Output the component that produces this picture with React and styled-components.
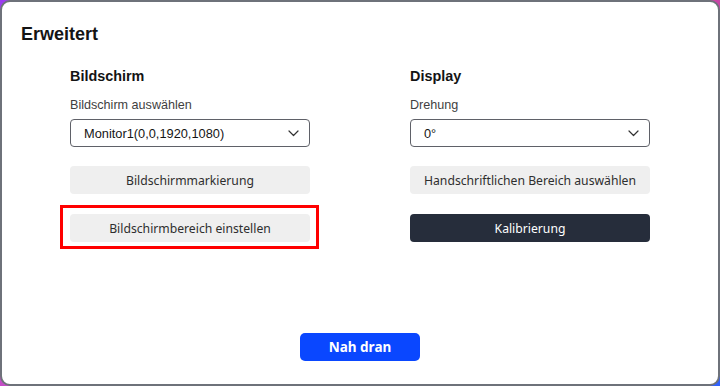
import styled, { createGlobalStyle } from 'styled-components'

const GlobalStyle = createGlobalStyle`
  html, body {
    margin: 0;
    padding: 0;
  }
  body {
    width: 720px;
    height: 386px;
    overflow: hidden;
    background: linear-gradient(135deg, #9b3cf0 0%, #c04fd0 30%, #e0409a 60%, #2f62ff 100%);
  }
`

const Window = styled.div`
  box-sizing: border-box;
  width: 720px;
  height: 386px;
  display: flex;
  flex-direction: column;
  background: #fff;
  border: 2px solid #6e727a;
  border-radius: 10px;
  padding: 20px 18px 23px;
  font-family: 'Liberation Sans', Arial, sans-serif;
  color: #1b1b1b;
`

const Title = styled.h1`
  margin: 0 0 0 1px;
  font-size: 18px;
  line-height: 24px;
  font-weight: 700;
  color: #141414;
`

const Columns = styled.div`
  display: grid;
  grid-template-columns: 240px 240px;
  column-gap: 100px;
  justify-content: center;
  margin-top: 21px;
`

const Column = styled.section`
  display: flex;
  flex-direction: column;
`

const Heading = styled.h2`
  margin: 0;
  font-size: 14.4px;
  line-height: 18px;
  font-weight: 700;
  color: #141414;
`

const Label = styled.div`
  margin-top: 12px;
  font-size: 12.6px;
  line-height: 16px;
  color: #3f3f3f;
`

const Select = styled.div`
  box-sizing: border-box;
  margin-top: 6px;
  height: 28px;
  display: flex;
  align-items: center;
  justify-content: space-between;
  padding: 0 10px 0 13px;
  border: 1px solid #5f6168;
  border-radius: 4px;
  font-size: 12.8px;
  color: #151515;
`

const Chevron = () => (
  <svg width="11" height="7" viewBox="0 0 11 7" fill="none">
    <path d="M1 1l4.5 4.5L10 1" stroke="#333" strokeWidth="1.2" strokeLinecap="round" strokeLinejoin="round" />
  </svg>
)

const Button = styled.button`
  box-sizing: border-box;
  position: relative;
  margin-top: ${p => p.$gap}px;
  height: 28px;
  width: 100%;
  border: none;
  border-radius: 4px;
  padding: 0;
  font-family: 'Noto Sans', sans-serif;
  font-size: 12.2px;
  background: ${p => (p.$dark ? '#262d3b' : '#efefef')};
  color: ${p => (p.$dark ? '#fff' : '#2e2e2e')};
`

const Marked = styled.div`
  position: relative;
  margin-top: 20px;

  ${Button} {
    margin-top: 0;
  }

  &::after {
    content: '';
    position: absolute;
    top: -9px;
    left: -10px;
    right: -9px;
    bottom: -7px;
    border: 3px solid #ff0000;
    pointer-events: none;
  }
`

const Footer = styled.div`
  margin-top: auto;
  display: flex;
  justify-content: center;
`

const PrimaryButton = styled.button`
  width: 120px;
  height: 28px;
  border: none;
  border-radius: 5px;
  background: #0a47ff;
  color: #fff;
  font-family: 'Noto Sans', sans-serif;
  font-size: 13.5px;
  font-weight: 700;
`

export default function App() {
  return (
    <>
      <GlobalStyle />
      <Window>
        <Title>Erweitert</Title>
        <Columns>
          <Column>
            <Heading>Bildschirm</Heading>
            <Label>Bildschirm auswählen</Label>
            <Select>
              <span>Monitor1(0,0,1920,1080)</span>
              <Chevron />
            </Select>
            <Button $gap={19}>Bildschirmmarkierung</Button>
            <Marked>
              <Button>Bildschirmbereich einstellen</Button>
            </Marked>
          </Column>
          <Column>
            <Heading>Display</Heading>
            <Label>Drehung</Label>
            <Select>
              <span>0°</span>
              <Chevron />
            </Select>
            <Button $gap={19}>Handschriftlichen Bereich auswählen</Button>
            <Button $gap={20} $dark>Kalibrierung</Button>
          </Column>
        </Columns>
        <Footer>
          <PrimaryButton>Nah dran</PrimaryButton>
        </Footer>
      </Window>
    </>
  )
}
